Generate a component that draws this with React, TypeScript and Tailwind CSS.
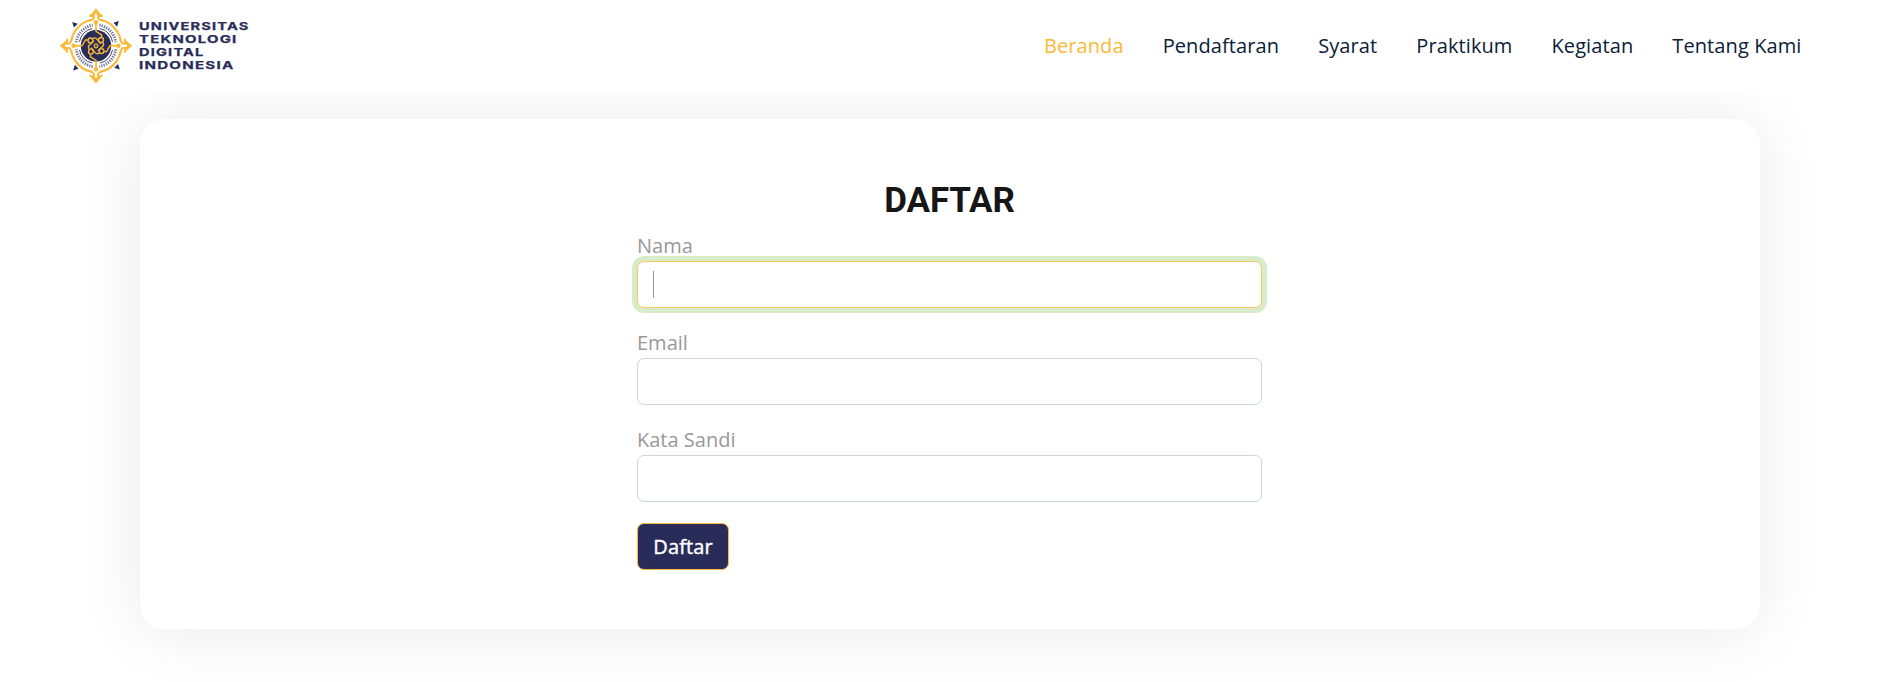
const navItems = ["Beranda", "Pendaftaran", "Syarat", "Praktikum", "Kegiatan", "Tentang Kami"];

const fields = [
  { id: "nama", label: "Nama", type: "text" },
  { id: "email", label: "Email", type: "email" },
  { id: "sandi", label: "Kata Sandi", type: "password" },
];

const logoLines = [
  { text: "UNIVERSITAS", y: 22.2, width: 110.5 },
  { text: "TEKNOLOGI", y: 35.2, width: 98.5 },
  { text: "DIGITAL", y: 48.2, width: 65.5 },
  { text: "INDONESIA", y: 61.2, width: 95.5 },
];

const quarters = [0, 90, 180, 270];

function Logo() {
  return (
    <svg className="h-[76px] w-[192px]" viewBox="0 0 192 76" role="img" aria-label="Universitas Teknologi Digital Indonesia">
      <g transform="translate(37 37.8) scale(.96 1)">
        <circle r="26.3" fill="none" stroke="#fab937" strokeWidth="2.2" />
        {quarters.map((angle) => (
          <g key={angle} transform={`rotate(${angle})`} fill="none">
            <path d="M3.5-20.7A21 21 0 0 1 20.7-3.5" stroke="#6f7292" strokeWidth="3" strokeDasharray="1.3 1.2" />
            <path d="M4-17.3A17.8 17.8 0 0 1 17.3-4" stroke="#292c58" strokeWidth="0.9" />
          </g>
        ))}
        {quarters.map((angle) => (
          <g key={angle} transform={`rotate(${angle})`}>
            <path d="M-5-30V-24H5V-30Z" fill="#fff" />
            <path d="M6.8-29.8 2.2-31V-28Q3-26 8-25M-6.8-29.8-2.2-31V-28Q-3-26-8-25" fill="none" stroke="#fab937" strokeWidth="2" />
            <path d="M0-37.6 7.4-28.9 0-32.3-7.4-28.9Z" fill="#fab937" />
            <path d="M0-24V-13" stroke="#fab937" strokeWidth="1.8" />
            <circle cy="-23.4" r="2.3" fill="#fab937" />
            <path d="M23.8-24.8 18.2-23 22-19Z" fill="#292c58" />
          </g>
        ))}
        <circle r="15.8" fill="#292c58" />
        {quarters.map((angle) => (
          <g key={angle} transform={`rotate(${angle})`} fill="none" stroke="#fab937" strokeWidth="1.4">
            <path d="M0-17V-14.5L5.8-11V-8.4" />
            <circle cx="5.3" cy="-5.8" r="2.5" />
            <path d="M-3.2-7.2Q-1-8.8 .8-6.8L5-2" />
          </g>
        ))}
        <circle r="2" fill="#292c58" stroke="#fab937" strokeWidth="1.2" />
        <circle r="0.6" fill="#fab937" />
      </g>
      {logoLines.map((line) => (
        <text
          key={line.text}
          x="80"
          y={line.y}
          textLength={line.width}
          lengthAdjust="spacingAndGlyphs"
          className="fill-[#292c58] stroke-[#292c58] stroke-[0.25px] font-['Inter',sans-serif] text-[10.8px] font-bold tracking-[0.9px]"
        >
          {line.text}
        </text>
      ))}
    </svg>
  );
}

export default function App() {
  return (
    <div className="flex h-[682px] flex-col overflow-hidden bg-white font-['Open_Sans',sans-serif] text-xl leading-[30px]">
      <header className="z-10 flex h-[93px] shrink-0 items-center justify-between bg-white pr-[88.5px] pb-[2px] pl-[59px]">
        <Logo />
        <nav className="flex gap-[39px] tracking-[0.1px]">
          {navItems.map((item, i) => (
            <a key={item} href="#" className={i === 0 ? "text-[#fab937]" : "text-[#0a2138]"}>
              {item}
            </a>
          ))}
        </nav>
      </header>
      <main className="mt-[26px] ml-[140px] flex h-[510px] w-[1620px] shrink-0 flex-col items-center rounded-[25px] bg-white pt-[60px] pr-px shadow-[0_2px_68px_rgba(0,0,0,0.085)]">
        <h1 className="h-[52px] font-['Roboto',sans-serif] text-[35px] leading-[43px] font-bold tracking-[-0.1px] text-[#161616]">DAFTAR</h1>
        <form className="w-[625px]">
          {fields.map((field) => (
            <div key={field.id} className="mb-5 h-[77px]">
              <label htmlFor={field.id} className="block h-[30px] text-[#999999]">
                {field.label}
              </label>
              {field.id === "nama" ? (
                <div id="nama" className="flex h-[47px] items-center rounded-[7px] border border-[#f8c963] bg-white px-[15px] shadow-[0_0_0_5px_#d9ecca]">
                  <span className="h-[27px] w-px bg-[#999999]" />
                </div>
              ) : (
                <input id={field.id} type={field.type} className="block h-[47px] w-full rounded-[7px] border border-[#ced4da] bg-white px-[15px] outline-none" />
              )}
            </div>
          ))}
          <button type="button" className="mt-px h-[47px] w-[92px] rounded-[7px] border border-[#fab937] bg-[#292c58] tracking-[0.1px] text-white [-webkit-text-stroke:0.4px_white]">
            Daftar
          </button>
        </form>
      </main>
    </div>
  );
}
